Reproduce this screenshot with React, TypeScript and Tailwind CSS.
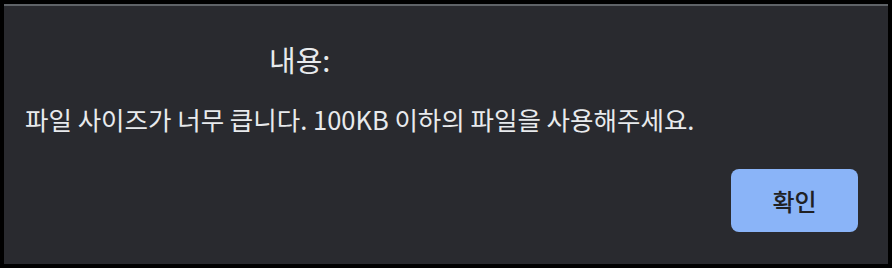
export default function App() {
  return (
    <div className="h-[268px] w-[892px] bg-black pl-[4px] pr-[4px] pt-[4px] pb-[4px]" style={{ fontFamily: '"Noto Sans CJK KR", "Noto Sans", sans-serif' }}>
      <div className="flex h-full flex-col border-t-2 border-[#5f6368] bg-[#292a2f] text-[#e8eaed]">
        <div className="pl-[265px] pt-[33px] text-[29px] leading-[40px]">내용:</div>
        <div className="pl-[21px] pt-[22px] text-[25.5px] leading-[36px]">
          파일 사이즈가 너무 큽니다. 100KB 이하의 파일을 사용해주세요.
        </div>
        <div className="flex justify-end pr-[30px] pt-[32px]">
          <button className="flex h-[63px] w-[127px] items-center justify-center rounded-[8px] bg-[#8ab4f8] text-[24px] font-medium text-[#202124]">
            확인
          </button>
        </div>
      </div>
    </div>
  );
}
